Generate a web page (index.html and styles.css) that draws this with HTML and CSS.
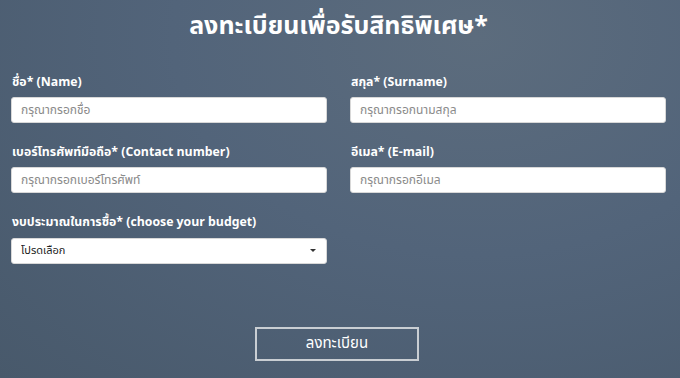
FILE: index.html
```html
<!DOCTYPE html>
<html lang="th">
<head>
  <meta charset="UTF-8" />
  <meta name="viewport" content="width=device-width, initial-scale=1.0" />
  <title>ลงทะเบียนเพื่อรับสิทธิพิเศษ</title>
  <link rel="stylesheet" href="styles.css">
</head>
<body>
  <form class="register-form" onsubmit="return false;">
    <h1>ลงทะเบียนเพื่อรับสิทธิพิเศษ*</h1>

    <div class="form-grid">
      <div class="field">
        <label for="firstName">ชื่อ* (Name)</label>
        <input type="text" id="firstName" placeholder="กรุณากรอกชื่อ" />
      </div>
      <div class="field">
        <label for="lastName">สกุล* (Surname)</label>
        <input type="text" id="lastName" placeholder="กรุณากรอกนามสกุล" />
      </div>
      <div class="field">
        <label for="phone">เบอร์โทรศัพท์มือถือ* (Contact number)</label>
        <input type="text" id="phone" placeholder="กรุณากรอกเบอร์โทรศัพท์" />
      </div>
      <div class="field">
        <label for="email">อีเมล* (E-mail)</label>
        <input type="text" id="email" placeholder="กรุณากรอกอีเมล" />
      </div>
      <div class="field">
        <label for="budget">งบประมาณในการซื้อ* (choose your budget)</label>
        <div class="select-box">
          <select id="budget">
            <option>โปรดเลือก</option>
          </select>
          <span class="caret"></span>
        </div>
      </div>
    </div>

    <div class="actions">
      <button type="submit" class="submit-button">ลงทะเบียน</button>
    </div>
  </form>
</body>
</html>
```

FILE: styles.css
```css
html, body {
  height: 100%;
}
body {
  margin: 0;
  font-family: "Noto Sans Thai", "Noto Sans", "DejaVu Sans", sans-serif;
  color: #fff;
  background: radial-gradient(ellipse at 70% 10%, #5c6c7d 0%, #52647a 45%, #48596b 100%);
  overflow: hidden;
}
.register-form {
  padding: 8px 14px 0 11px;
}
h1 {
  margin: 0;
  text-align: center;
  font-size: 25px;
  font-weight: bold;
  line-height: 36px;
}
.form-grid {
  display: grid;
  grid-template-columns: 316px 316px;
  column-gap: 23px;
  row-gap: 22px;
  margin-top: 31px;
}
.field label {
  display: block;
  font-size: 12.3px;
  font-weight: bold;
  line-height: 16px;
  margin-bottom: 6px;
  padding-left: 1px;
}
.field input,
.field select {
  width: 100%;
  height: 26px;
  box-sizing: border-box;
  border: 1px solid #d8d8d8;
  border-radius: 3px;
  background: #fff;
  padding: 0 9px;
  font-family: inherit;
  font-size: 12px;
  color: #333;
}
.field input::placeholder {
  color: #8a8a8a;
}
.select-box {
  position: relative;
}
.field select {
  appearance: none;
  -webkit-appearance: none;
  font-size: 11px;
  color: #222;
}
.caret {
  position: absolute;
  right: 11px;
  top: 12px;
  border-left: 3px solid transparent;
  border-right: 3px solid transparent;
  border-top: 3px solid #333;
}
.actions {
  display: flex;
  justify-content: center;
  margin-top: 63px;
  padding-right: 3px;
}
.submit-button {
  width: 164px;
  height: 34px;
  background: transparent;
  border: 2px solid #c9ced3;
  color: #fff;
  font-family: inherit;
  font-size: 15px;
  cursor: pointer;
}
```
